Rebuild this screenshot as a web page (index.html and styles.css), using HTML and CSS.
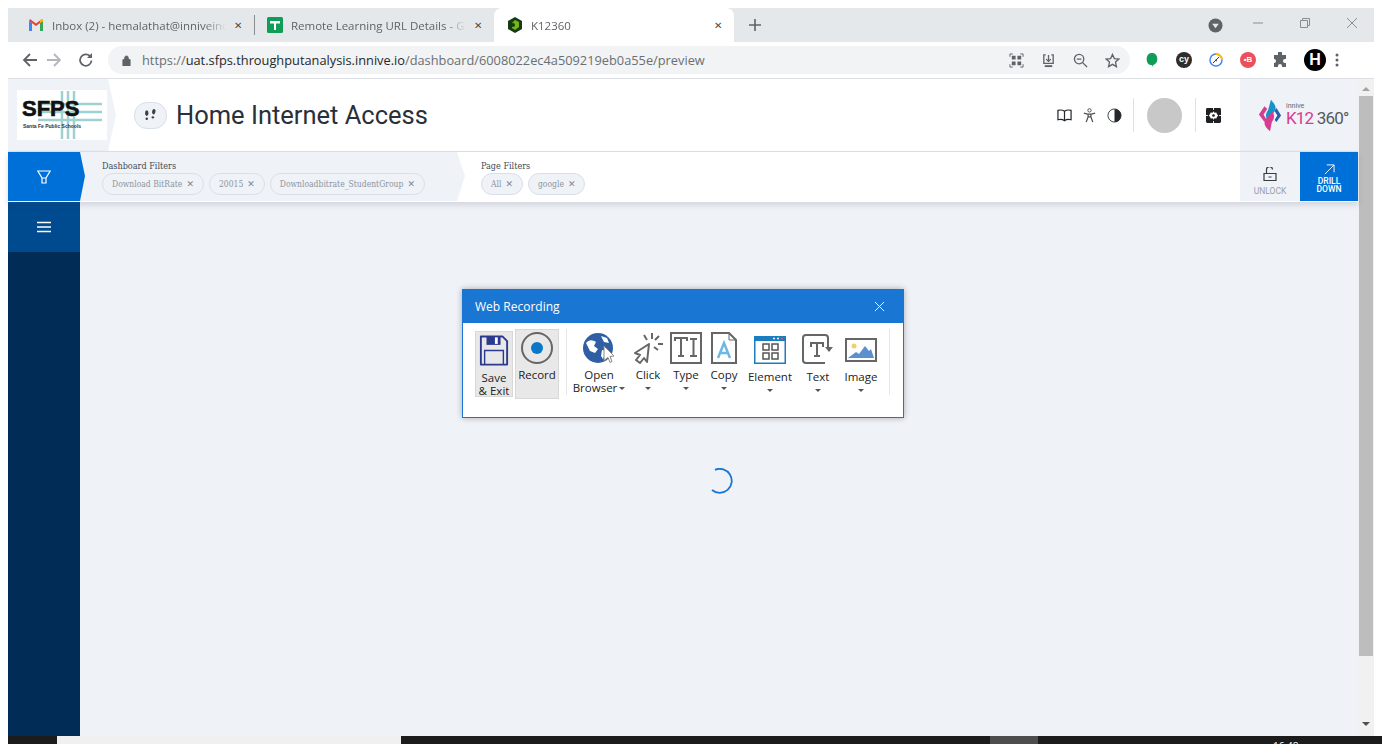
FILE: index.html
```html
<!DOCTYPE html>
<html lang="en">
<head>
<meta charset="UTF-8">
<title>K12360</title>
<link rel="stylesheet" href="styles.css">
</head>
<body>
<div class="tabstrip">
  <div class="tab tab-gmail">
    <svg class="fav" viewBox="0 0 16 14"><path d="M1 13V3l3 2v8z" fill="#4285f4"/><path d="M15 13V3l-3 2v8z" fill="#34a853"/><path d="M1 3l7 5 7-5-1-2-6 4.500L2 1z" fill="#ea4335"/><path d="M12 5l3-2-1-2-2 1.500z" fill="#fbbc04"/></svg>
    <span class="tab-title">Inbox (2) - hemalathat@inniveinc.com</span>
    <span class="tab-x">&#10005;</span>
  </div>
  <div class="tab-sep"></div>
  <div class="tab tab-sheet">
    <svg class="fav" viewBox="0 0 16 16"><rect width="16" height="16" rx="1.500" fill="#0f9d58"/><path d="M3 4h10v2.500H9V13H7V6.500H3z" fill="#fff"/></svg>
    <span class="tab-title">Remote Learning URL Details - Google Sheets</span>
    <span class="tab-x">&#10005;</span>
  </div>
  <div class="tab tab-active">
    <svg class="fav" viewBox="0 0 16 16"><path d="M8 0l7 4v8l-7 4-7-4V4z" fill="#143c14"/><path d="M8 3l4 2v5l-4 3-3-2V6z" fill="#7ab317"/><circle cx="6" cy="8" r="2" fill="#143c14"/></svg>
    <span class="tab-title">K12360</span>
    <span class="tab-x">&#10005;</span>
  </div>
  <svg class="new-tab" viewBox="0 0 12 12"><path d="M6 0v12M0 6h12" stroke="#5f6368" stroke-width="1.600"/></svg>
  <div class="strip-right">
    <svg class="profile-dd" viewBox="0 0 16 16"><circle cx="8" cy="8" r="7.500" fill="#5f6368"/><path d="M4.500 6h7L8 11z" fill="#e5e8eb"/></svg>
    <svg class="win-btn" viewBox="0 0 12 12"><path d="M1 6h10" stroke="#8a8d90"/></svg>
    <svg class="win-btn" viewBox="0 0 12 12"><path d="M1.500 3.500h7v7h-7zM3.500 3.500v-2h7v7h-2" fill="none" stroke="#8a8d90"/></svg>
    <svg class="win-btn" viewBox="0 0 12 12"><path d="M1 1l10 10M11 1L1 11" stroke="#8a8d90"/></svg>
  </div>
</div>

<div class="toolbar">
  <svg class="nav-icon" viewBox="0 0 16 16"><path d="M15 8H2M8 2L2 8l6 6" fill="none" stroke="#5f6368" stroke-width="1.800"/></svg>
  <svg class="nav-icon" viewBox="0 0 16 16"><path d="M1 8h13M8 2l6 6-6 6" fill="none" stroke="#b4b7ba" stroke-width="1.800"/></svg>
  <svg class="nav-icon" viewBox="0 0 16 16"><path d="M13.500 8.500A5.700 5.700 0 1 1 11.800 4" fill="none" stroke="#5f6368" stroke-width="1.800"/><path d="M14 1v5H9z" fill="#5f6368"/></svg>
  <div class="omnibox">
    <svg class="lock" viewBox="0 0 10 12"><path d="M1 5h8v7H1zM3 5V3a2 2 0 0 1 4 0v2" fill="#5f6368" stroke="#5f6368"/></svg>
    <span class="url">https://<b>uat.sfps.throughputanalysis.innive.io</b>/dashboard/6008022ec4a509219eb0a55e/preview</span>
    <div class="omni-icons">
      <svg viewBox="0 0 16 16"><path d="M1 4V1h3M12 1h3v3M15 12v3h-3M4 15H1v-3" fill="none" stroke="#5f6368"/><path d="M3 3h4v4H3zM9 3h4v4H9zM3 9h4v4H3zM9 9h4v4H9z" fill="#5f6368"/></svg>
      <svg viewBox="0 0 16 16"><path d="M5 2H3v9h10V2h-2M8 2v7M5.500 6.500L8 9l2.500-2.500" fill="none" stroke="#5f6368" stroke-width="1.400"/><path d="M4 14h8" stroke="#5f6368" stroke-width="2"/></svg>
      <svg viewBox="0 0 16 16"><circle cx="6.500" cy="6.500" r="5" fill="none" stroke="#5f6368" stroke-width="1.400"/><path d="M10 10l5 5M4 6.500h5" stroke="#5f6368" stroke-width="1.400"/></svg>
      <svg viewBox="0 0 16 16"><path d="M8 1.500l2 4.500 4.800.500-3.600 3.200 1 4.800L8 12.100l-4.200 2.400 1-4.800L1.200 6.500 6 6z" fill="none" stroke="#5f6368" stroke-width="1.400"/></svg>
    </div>
  </div>
  <div class="ext-icons">
    <svg viewBox="0 0 16 18"><path d="M8 1c4 0 6 3 6 7s-2 6-5 7l-1 2v-2c-4 0-6-3-6-7s2-7 6-7z" fill="#0f9d58"/></svg>
    <span class="ext-cy">cy</span>
    <svg viewBox="0 0 16 16"><circle cx="8" cy="8" r="6" fill="#fff" stroke="#4285f4" stroke-width="1.500"/><path d="M8 2a6 6 0 0 1 6 6" fill="none" stroke="#fbbc04" stroke-width="2"/><path d="M5 11l6-6M7 8l2 1" stroke="#333" stroke-width="1"/></svg>
    <span class="ext-red">&#8226;B</span>
    <svg viewBox="0 0 16 16"><path d="M6 1a2 2 0 0 1 4 0v2h4v4h-1a2 2 0 0 0 0 4h1v4h-4v-1a2 2 0 0 0-4 0v1H2v-4a2 2 0 0 0 0-4V3h4z" fill="#5f6368"/></svg>
    <span class="ext-h">H</span>
    <svg viewBox="0 0 4 16"><circle cx="2" cy="3" r="1.500" fill="#5f6368"/><circle cx="2" cy="8" r="1.500" fill="#5f6368"/><circle cx="2" cy="13" r="1.500" fill="#5f6368"/></svg>
  </div>
</div>

<div class="page">
  <div class="app">
    <header class="app-head">
      <div class="brand">
        <div class="sfps-logo">
          <svg class="sfps-cross" viewBox="0 0 80 50"><path d="M40 1v48M46 1v48M52 1v48M16 14h64M16 22h64M16 30h64" stroke="#9ed1cf" stroke-width="2.500" fill="none"/></svg>
          <span class="sfps-text">SFPS</span>
          <span class="sfps-sub">Santa Fe Public Schools</span>
        </div>
      </div>
      <div class="step-icon">
        <svg viewBox="0 0 16 14"><ellipse cx="4" cy="5" rx="1.800" ry="3" fill="#3a3f45"/><circle cx="4" cy="11" r="1.300" fill="#3a3f45"/><ellipse cx="11.500" cy="3.500" rx="1.800" ry="3" fill="#3a3f45" transform="rotate(12 11.500 3.500)"/><circle cx="10.500" cy="9.500" r="1.300" fill="#3a3f45"/></svg>
      </div>
      <h1 class="page-title">Home Internet Access</h1>
      <div class="head-tools">
        <svg viewBox="0 0 16 14"><path d="M8 2.500C6 1 3 1 1 1.500v10c2-.5 5-.5 7 1 2-1.500 5-1.500 7-1v-10C13 1 10 1 8 2.500zM8 2.500v10" fill="none" stroke="#25282c" stroke-width="1.300"/></svg>
        <svg viewBox="0 0 14 16"><circle cx="7" cy="2.500" r="1.800" fill="none" stroke="#4a4d52"/><path d="M1 5.500l4 1h4l4-1M5.500 6.500v3L3.500 15M8.500 6.500v3l2 5.500M5.500 9.500h3" fill="none" stroke="#4a4d52" stroke-width="1.300"/></svg>
        <svg viewBox="0 0 16 16"><circle cx="8" cy="8" r="7" fill="#fff" stroke="#3a3d42"/><path d="M8 1a7 7 0 0 1 0 14z" fill="#25282c"/></svg>
        <span class="head-sep"></span>
        <span class="avatar"></span>
        <span class="head-sep"></span>
        <svg viewBox="0 0 16 16"><rect width="16" height="16" rx="1.500" fill="#1d1f22"/><path d="M8 3.500l1 1.500 2-.3.700 1.800L13 8l-1.300 1.500-.7 1.800-2-.3-1 1.500L7 11l-2 .3-.7-1.800L3 8l1.300-1.500L5 4.700 7 5z" fill="#fff"/><circle cx="8" cy="8" r="1.400" fill="#1d1f22"/><path d="M0 8h2M14 8h2M8 0v2M8 14v2" stroke="#fff"/></svg>
      </div>
      <div class="k12-logo">
        <svg viewBox="0 0 26 36"><path d="M14 1c5 6 8 9 1 16l-5 6c-2-4-2-7 1-11z" fill="#1793c7"/><path d="M13 35c-7-6-8-10-2-16l5-5c2 4 2 7-1 11z" fill="#d63c8f"/><path d="M7 8L1 17l6 8 2-3-3-5 4-6z" fill="#d63c8f"/><path d="M20 10l5 8-5 7-2-2 3-5-3-5z" fill="#2a5caa"/></svg>
        <div class="k12-words">
          <span class="k12-innive">innive</span>
          <span class="k12-main"><em>K12</em> 360&deg;</span>
        </div>
      </div>
    </header>

    <div class="filter-row">
      <div class="filter-btn">
        <svg viewBox="0 0 14 14"><path d="M.8 1h12.400L9 8v5H5V8zM5 8h4" fill="none" stroke="#fff" stroke-width="1.200"/></svg>
      </div>
      <div class="filter-groups">
        <div class="filter-group group-dash">
          <div class="filter-label">Dashboard Filters</div>
          <div class="chips">
            <span class="chip">Download BitRate <i>&#10005;</i></span>
            <span class="chip">20015 <i>&#10005;</i></span>
            <span class="chip">Downloadbitrate_StudentGroup <i>&#10005;</i></span>
          </div>
        </div>
        <div class="filter-group group-page">
          <div class="filter-label">Page Filters</div>
          <div class="chips">
            <span class="chip">All <i>&#10005;</i></span>
            <span class="chip">google <i>&#10005;</i></span>
          </div>
        </div>
      </div>
      <div class="unlock">
        <svg viewBox="0 0 14 14"><path d="M1 6.500h12v7H1zM3.500 6.500V3a3 3 0 0 1 6-.5M5.500 10h3" fill="none" stroke="#3a3d42" stroke-width="1.200"/></svg>
        <span>UNLOCK</span>
      </div>
      <div class="drill">
        <svg viewBox="0 0 12 12"><path d="M1 11L11 1M3 1h8v8" fill="none" stroke="#fff" stroke-width="1"/></svg>
        <span>DRILL<br>DOWN</span>
      </div>
    </div>

    <div class="app-body">
      <aside class="sidebar">
        <div class="menu-btn">
          <svg viewBox="0 0 16 12"><path d="M1 1.500h14M1 6h14M1 10.500h14" stroke="#fff" stroke-width="1.300"/></svg>
        </div>
      </aside>
      <main class="content">
        <svg class="spinner" viewBox="0 0 26 26"><path d="M8 1.800A12 12 0 1 1 5 22" fill="none" stroke="#1976d2" stroke-width="1.800"/></svg>
      </main>
    </div>
  </div>
  <div class="scrollbar">
    <span class="arrow-up"></span>
    <span class="thumb"></span>
    <span class="arrow-down"></span>
  </div>

  <div class="recorder">
    <div class="rec-title">
      <span>Web Recording</span>
      <svg viewBox="0 0 12 12"><path d="M1 1l10 10M11 1L1 11" stroke="#fff" stroke-width="1"/></svg>
    </div>
    <div class="rec-tools">
      <div class="rec-tool save">
        <svg viewBox="0 0 32 34"><path d="M2 2h23l5 5v25H2z" fill="none" stroke="#2b3a8f" stroke-width="2" stroke-linejoin="round"/><path d="M8 2h15v9H8z" fill="#2b3a8f"/><path d="M17 3h3v7h-3z" fill="#fff"/><path d="M6 32V17h20v15" fill="none" stroke="#2b3a8f" stroke-width="1.500"/></svg>
        <span>Save<br>&amp; Exit</span>
      </div>
      <div class="rec-tool record">
        <svg viewBox="0 0 32 32"><circle cx="16" cy="16" r="15" fill="none" stroke="#666" stroke-width="2"/><circle cx="16" cy="16" r="6" fill="#0a78c8"/></svg>
        <span>Record</span>
      </div>
      <div class="rec-sep"></div>
      <div class="rec-tool open">
        <svg viewBox="0 0 34 32"><circle cx="16" cy="16" r="15" fill="#2f5ea5"/><path d="M4 11c3-4 7-3 10-1l-2 4 4 3-3 4-5-2zM19 4l6 2 2 5-5-1zM20 18l4 1-3 8-2-3z" fill="#fff"/><path d="M22 14l10 10-4 .500 2 5-2 1-2-5-4 3z" fill="#fff" stroke="#888"/></svg>
        <span>Open<br>Browser<i class="caret-in"></i></span>
      </div>
      <div class="rec-tool click">
        <svg viewBox="0 0 32 32"><path d="M17 12L3 21l5 2-4 5 4 3 4-5 3 4z" fill="#fff" stroke="#666" stroke-width="2" stroke-linejoin="round"/><path d="M20 1v6M27 4l-4 4M31 12h-5M12 3l3 5M26 18l-4-3" stroke="#666" stroke-width="2"/></svg>
        <span>Click</span><i class="caret"></i>
      </div>
      <div class="rec-tool type">
        <svg viewBox="0 0 32 32"><rect x="1" y="1" width="30" height="30" fill="#fff" stroke="#666" stroke-width="2"/><path d="M5 9V6h12v3M11 6v18M8 24h6M20 7h7M23.500 7v17M20 24h7" fill="none" stroke="#666" stroke-width="2"/></svg>
        <span>Type</span><i class="caret"></i>
      </div>
      <div class="rec-tool copy">
        <svg viewBox="0 0 26 32"><path d="M1 1h17l7 7v23H1z" fill="#fff" stroke="#666" stroke-width="2"/><path d="M18 1v7h7" fill="none" stroke="#666"/><path d="M7 26l6-15 6 15M9 21h8" fill="none" stroke="#6db6e6" stroke-width="2.500"/></svg>
        <span>Copy</span><i class="caret"></i>
      </div>
      <div class="rec-tool element">
        <svg viewBox="0 0 32 28"><rect width="32" height="28" fill="#1a7dbd"/><rect x="1.500" y="5" width="29" height="21.500" fill="#fff"/><path d="M9 8h6v6H9zM18 8h6v6h-6zM9 17h6v6H9zM18 17h6v6h-6z" fill="none" stroke="#555" stroke-width="1.500"/><circle cx="20" cy="2.500" r="1" fill="#fff"/><circle cx="24" cy="2.500" r="1" fill="#fff"/><circle cx="28" cy="2.500" r="1" fill="#e4566a"/></svg>
        <span>Element</span><i class="caret"></i>
      </div>
      <div class="rec-tool text">
        <svg viewBox="0 0 32 30"><path d="M26 13V4a3 3 0 0 0-3-3H4a3 3 0 0 0-3 3v22a3 3 0 0 0 3 3h19" fill="none" stroke="#666" stroke-width="2"/><path d="M9 13V9h12v4M15 9v13M12 22h6" fill="none" stroke="#666" stroke-width="2"/><path d="M23 13l4 5 4-5z" fill="#666"/></svg>
        <span>Text</span><i class="caret"></i>
      </div>
      <div class="rec-tool image">
        <svg viewBox="0 0 32 24"><rect x="1" y="1" width="30" height="22" fill="#fff" stroke="#666" stroke-width="2"/><circle cx="9" cy="8" r="2.500" fill="#f0d264"/><path d="M3 20l8-6 3 2 6-8 4 5 2-2 3 9z" fill="#5b8fd0"/></svg>
        <span>Image</span><i class="caret"></i>
      </div>
      <div class="rec-sep rec-sep-end"></div>
    </div>
  </div>
</div>

<div class="taskbar">
  <div class="task-start"></div>
  <div class="task-search"></div>
  <div class="task-active"></div>
  <div class="task-clock">16:48</div>
</div>
</body>
</html>
```

FILE: styles.css
```css
html, body {
    margin: 0;
    height: 744px;
    overflow: hidden;
    background: #fff;
}
body {
    padding: 8px 8px 0;
    box-sizing: border-box;
    display: flex;
    flex-direction: column;
    font-family: "Open Sans", sans-serif;
}
svg {
    display: block;
    flex: none;
}

/* browser chrome */
.tabstrip {
    height: 34px;
    background: #e5e8eb;
    display: flex;
    align-items: center;
    flex: none;
}
.tab {
    height: 34px;
    display: flex;
    align-items: center;
    box-sizing: border-box;
    font-size: 11.500px;
    color: #5f6368;
    flex: none;
}
.tab-gmail {
    width: 246px;
    padding: 0 8px 0 20px;
}
.tab-sheet {
    width: 239px;
    padding: 0 8px 0 12px;
}
.tab-active {
    width: 240px;
    padding: 0 8px 0 13px;
    background: #fff;
    border-radius: 8px 8px 0 0;
}
.fav {
    width: 16px;
    height: 16px;
    margin-right: 8px;
    flex: none;
}
.tab-title {
    flex: 1;
    white-space: nowrap;
    overflow: hidden;
    -webkit-mask-image: linear-gradient(to left, transparent, #000 22px);
}
.tab-x {
    font-size: 10px;
    width: 16px;
    text-align: center;
    color: #4a4d52;
    margin-left: 4px;
}
.tab-sep {
    width: 1px;
    height: 20px;
    background: #8a8d90;
    flex: none;
}
.new-tab {
    width: 12px;
    height: 12px;
    margin-left: 15px;
}
.strip-right {
    margin-left: auto;
    display: flex;
    align-items: center;
}
.profile-dd {
    width: 15px;
    height: 15px;
    margin-right: 29px;
}
.win-btn {
    width: 12px;
    height: 12px;
    margin-right: 35px;
    margin-top: -5px;
}
.win-btn:last-child {
    margin-right: 16px;
}
.toolbar {
    height: 36px;
    flex: none;
    display: flex;
    align-items: center;
    border-bottom: 1px solid #dcdfe3;
    background: #fff;
}
.nav-icon {
    width: 16px;
    height: 16px;
    margin-left: 14px;
    margin-right: 2px;
}
.nav-icon + .nav-icon {
    margin-left: 6px;
    margin-right: 0;
}
.nav-icon + .nav-icon + .nav-icon {
    margin-left: 16px;
}
.omnibox {
    margin-left: 14px;
    width: 1022px;
    height: 28px;
    border-radius: 14px;
    background: #f1f3f4;
    display: flex;
    align-items: center;
    padding: 0 10px 0 14px;
    box-sizing: border-box;
    flex: none;
}
.lock {
    width: 9px;
    height: 11px;
    margin-right: 11px;
}
.url {
    font-size: 12.800px;
    color: #6b6f73;
    white-space: nowrap;
}
.url b {
    font-weight: 400;
    color: #26282b;
}
.omni-icons {
    margin-left: auto;
    display: flex;
    gap: 17px;
}
.omni-icons svg {
    width: 15px;
    height: 15px;
}
.ext-icons {
    display: flex;
    align-items: center;
    margin-left: 14px;
}
.ext-icons svg {
    width: 16px;
    height: 16px;
    margin-right: 16px;
}
.ext-icons svg:last-child {
    width: 4px;
    margin: 0 0 0 9px;
}
.ext-cy, .ext-red, .ext-h {
    width: 16px;
    height: 16px;
    border-radius: 50%;
    background: #2d2d2d;
    color: #fff;
    font: 700 9px/15px "Liberation Sans", sans-serif;
    text-align: center;
    margin-right: 16px;
    flex: none;
}
.ext-red {
    background: #e9505a;
    font-size: 8px;
}
.ext-h {
    width: 22px;
    height: 22px;
    background: #000;
    font-size: 16px;
    line-height: 22px;
    margin-right: 0;
}

/* page */
.page {
    flex: 1;
    display: flex;
    position: relative;
    min-height: 0;
    background: #eff2f7;
}
.app {
    width: 1350px;
    display: flex;
    flex-direction: column;
    font-family: Roboto, sans-serif;
}
.app-head {
    height: 73px;
    flex: none;
    display: flex;
    align-items: center;
    background: #fff;
    border-bottom: 1px solid #dce2ea;
    box-sizing: border-box;
}
.brand {
    width: 108px;
    height: 72px;
    background: #eff2f7;
    clip-path: polygon(0 0, 100px 0, 108px 36px, 100px 100%, 0 100%);
    display: flex;
    align-items: center;
    padding-left: 9px;
    box-sizing: border-box;
    flex: none;
}
.sfps-logo {
    width: 90px;
    height: 50px;
    background: #fff;
    position: relative;
    overflow: hidden;
}
.sfps-cross {
    position: absolute;
    left: 0;
    top: 0;
    width: 90px;
    height: 50px;
}
.sfps-text {
    position: absolute;
    left: 5px;
    top: 6px;
    font: 900 22px/26px "Liberation Sans", sans-serif;
    color: #111;
    -webkit-text-stroke: .6px #111;
}
.sfps-sub {
    position: absolute;
    left: 6px;
    top: 33px;
    font: 700 5px/6px "Liberation Sans", sans-serif;
    color: #333;
    white-space: nowrap;
}
.step-icon {
    width: 33px;
    height: 27px;
    margin-left: 18px;
    border: 1px solid #d9dfe8;
    border-radius: 13px;
    background: #eff2f7;
    display: flex;
    align-items: center;
    justify-content: center;
    box-sizing: border-box;
    flex: none;
}
.step-icon svg {
    width: 15px;
    height: 14px;
}
.page-title {
    margin: 0 0 0 9px;
    font-size: 25.500px;
    font-weight: 400;
    color: #2a3038;
    white-space: nowrap;
}
.head-tools {
    margin-left: auto;
    display: flex;
    align-items: center;
}
.head-tools svg {
    width: 15px;
    height: 15px;
    margin-left: 10px;
}
.head-sep {
    width: 1px;
    height: 34px;
    background: #dce2ea;
    margin-left: 11px;
}
.avatar {
    width: 35px;
    height: 35px;
    border-radius: 50%;
    background: #c8c8c8;
    margin: 0 2px 0 13px;
    flex: none;
}
.k12-logo {
    width: 118px;
    height: 72px;
    margin-left: 19px;
    background: #eff2f7;
    display: flex;
    align-items: center;
    padding-left: 18px;
    box-sizing: border-box;
    flex: none;
}
.k12-logo svg {
    width: 24px;
    height: 35px;
}
.k12-words {
    margin-left: 4px;
    display: flex;
    flex-direction: column;
}
.k12-innive {
    font-size: 7px;
    line-height: 7px;
    color: #666;
}
.k12-main {
    font-size: 17px;
    line-height: 17px;
    letter-spacing: -.8px;
    color: #55585c;
    white-space: nowrap;
}
.k12-main em {
    font-style: normal;
    color: #d63c8f;
}

/* filter bar */
.filter-row {
    height: 50px;
    flex: none;
    display: flex;
    background: #fff;
    box-shadow: 0 3px 6px rgba(60, 70, 90, .16);
    position: relative;
    z-index: 1;
}
.filter-btn {
    width: 78px;
    height: 49px;
    background: #0070d9;
    clip-path: polygon(0 0, 73px 0, 78px 24px, 73px 100%, 0 100%);
    display: flex;
    align-items: center;
    justify-content: center;
    padding-right: 6px;
    box-sizing: border-box;
    flex: none;
}
.filter-btn svg {
    width: 14px;
    height: 14px;
}
.filter-groups {
    flex: 1;
    display: flex;
    margin-left: -6px;
}
.filter-group {
    padding: 9px 0 0 22px;
    height: 49px;
    box-sizing: border-box;
    font-family: "DejaVu Serif Condensed", "Liberation Serif", serif;
}
.group-dash {
    width: 385px;
    background: #eff2f7;
    clip-path: polygon(0 0, 377px 0, 385px 24px, 377px 100%, 0 100%, 5px 24px);
}
.group-page {
    flex: 1;
    padding-left: 16px;
}
.filter-label {
    font-size: 9px;
    line-height: 10px;
    color: #444b55;
}
.chips {
    display: flex;
    gap: 5px;
    margin-top: 2px;
}
.chip {
    height: 22px;
    padding: 0 9px;
    border: 1px solid #d9dfe8;
    border-radius: 11px;
    display: flex;
    align-items: center;
    font-size: 8.500px;
    color: #8e959e;
    box-sizing: border-box;
    white-space: nowrap;
    background: #eff2f7;
}
.chip i {
    font: normal 9px "DejaVu Sans", sans-serif;
    margin-left: 4px;
    color: #808790;
}
.unlock {
    width: 60px;
    height: 49px;
    background: #eff2f7;
    display: flex;
    flex-direction: column;
    align-items: center;
    padding-top: 15px;
    box-sizing: border-box;
    font-size: 8.500px;
    color: #9aa0a8;
    flex: none;
}
.unlock svg {
    width: 14px;
    height: 14px;
    margin-bottom: 5px;
}
.drill {
    width: 58px;
    height: 49px;
    background: #0070d9;
    color: #fff;
    display: flex;
    flex-direction: column;
    align-items: center;
    padding-top: 12px;
    box-sizing: border-box;
    font-size: 8.500px;
    line-height: 8px;
    font-weight: 500;
    text-align: center;
    flex: none;
}
.drill svg {
    width: 11px;
    height: 11px;
    margin-bottom: 2px;
}
.app-body {
    flex: 1;
    display: flex;
    min-height: 0;
}
.sidebar {
    width: 72px;
    background: #002c56;
    flex: none;
}
.menu-btn {
    height: 50px;
    background: #004a8f;
    display: flex;
    align-items: center;
    justify-content: center;
}
.menu-btn svg {
    width: 16px;
    height: 12px;
}
.content {
    flex: 1;
    display: flex;
    justify-content: center;
    padding: 266px 0 0 0;
    box-sizing: border-box;
}
.spinner {
    width: 26px;
    height: 26px;
    margin-left: 1px;
}

/* scrollbar */
.scrollbar {
    width: 16px;
    background: #f1f1f1;
    display: flex;
    flex-direction: column;
    align-items: center;
    flex: none;
}
.thumb {
    width: 14px;
    height: 560px;
    background: #bdbdbd;
    margin-top: 5px;
}
.arrow-up, .arrow-down {
    width: 0;
    height: 0;
    border-left: 4px solid transparent;
    border-right: 4px solid transparent;
    margin-top: 8px;
}
.arrow-up {
    border-bottom: 4px solid #a3a3a3;
}
.arrow-down {
    border-top: 4px solid #505050;
    margin-top: 66px;
}

/* recorder dialog, floats over the page */
.recorder {
    position: absolute;
    left: 454px;
    top: 210px;
    width: 442px;
    height: 129px;
    background: #fff;
    border: 1px solid #1976d2;
    box-sizing: border-box;
    box-shadow: 0 0 6px rgba(0, 0, 0, .3);
    font-family: "Open Sans", sans-serif;
    color: #222;
}
.rec-title {
    height: 33px;
    background: #1976d2;
    color: #fff;
    font-size: 12px;
    display: flex;
    align-items: center;
    justify-content: space-between;
    padding: 0 18px 0 12px;
}
.rec-title svg {
    width: 11px;
    height: 11px;
}
.rec-tools {
    display: flex;
    padding: 6px 0 0 12px;
    align-items: flex-start;
}
.rec-tool {
    display: flex;
    flex-direction: column;
    align-items: center;
    font-size: 11.500px;
    line-height: 13px;
    text-align: center;
    white-space: nowrap;
    box-sizing: border-box;
    flex: none;
}
.save {
    width: 38px;
    height: 66px;
    margin-top: 2px;
    background: #e8e8e8;
    border: 1px solid #d8d8d8;
    padding-top: 2px;
}
.save svg {
    width: 30px;
    height: 33px;
    margin-bottom: 4px;
}
.record {
    width: 44px;
    height: 70px;
    margin-left: 2px;
    background: #e8e8e8;
    border: 1px solid #d8d8d8;
    padding-top: 2px;
}
.record svg {
    width: 32px;
    height: 32px;
    margin-bottom: 4px;
}
.rec-sep {
    width: 1px;
    height: 66px;
    background: #e6e6e6;
    margin: 0 0 0 7px;
    flex: none;
}
.rec-sep-end {
    margin-left: 6px;
}
.rec-tool i.caret {
    width: 0;
    height: 0;
    border: 3px solid transparent;
    border-top: 3px solid #555;
    border-bottom: 0;
    margin-top: 6px;
}
.caret-in {
    display: inline-block;
    border: 3px solid transparent;
    border-top: 3px solid #555;
    border-bottom: 0;
    margin-left: 2px;
    vertical-align: 2px;
}
.open {
    width: 58px;
    margin-left: 3px;
    padding-top: 3px;
}
.open svg {
    width: 34px;
    height: 32px;
    margin-bottom: 4px;
}
.click {
    width: 38px;
    margin-left: 1px;
    padding-top: 3px;
}
.click svg {
    width: 32px;
    height: 32px;
    margin-bottom: 4px;
}
.type {
    width: 38px;
    padding-top: 3px;
}
.type svg {
    width: 32px;
    height: 32px;
    margin-bottom: 4px;
}
.copy {
    width: 38px;
    padding-top: 3px;
}
.copy svg {
    width: 26px;
    height: 32px;
    margin-bottom: 4px;
}
.element {
    width: 54px;
    padding-top: 7px;
}
.element svg {
    width: 32px;
    height: 28px;
    margin-bottom: 6px;
}
.text {
    width: 42px;
    padding-top: 5px;
}
.text svg {
    width: 32px;
    height: 30px;
    margin-bottom: 6px;
}
.image {
    width: 44px;
    padding-top: 9px;
}
.image svg {
    width: 32px;
    height: 24px;
    margin-bottom: 8px;
}

/* cut-off taskbar at the bottom edge */
.taskbar {
    height: 8px;
    flex: none;
    margin-right: -8px;
    background: #1c1c1c;
    display: flex;
    align-items: flex-start;
    color: #fff;
    overflow: hidden;
}
.task-start {
    width: 49px;
    flex: none;
}
.task-search {
    width: 344px;
    height: 8px;
    background: #f0f0f0;
    flex: none;
}
.task-active {
    width: 48px;
    height: 8px;
    background: #4d4d4d;
    margin-left: 589px;
    flex: none;
}
.task-clock {
    margin-left: 235px;
    font-size: 10px;
    line-height: 12px;
    margin-top: 4px;
}
```
